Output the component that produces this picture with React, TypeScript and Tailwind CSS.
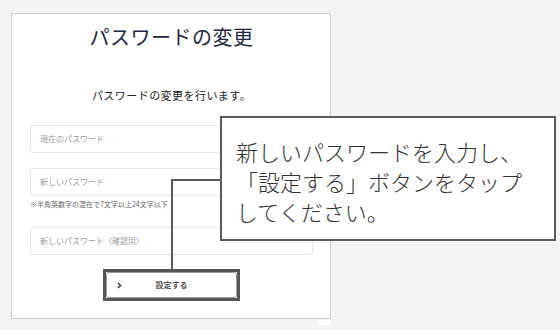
export default function App() {
  return (
    <div className="relative w-[560px] h-[330px] overflow-hidden bg-[#f3f3f3] pl-[11px] pt-[13px] font-['Noto_Sans_CJK_JP',sans-serif]">
      <div className="w-[320px] h-[306px] bg-white border border-[#cfcfcf] flex flex-col items-center pl-[18px] pr-[17px]">
        <h1 className="mt-[9px] h-[28px] leading-[28px] text-[20px] tracking-[0.5px] text-[#1f2643]">
          パスワードの変更
        </h1>
        <p className="mt-[36px] h-[16px] leading-[16px] text-[11px] tracking-[0.45px] text-[#222]">
          パスワードの変更を行います。
        </p>
        <div className="mt-[22px] w-full h-[28px] rounded-[3px] border border-[#e6e6e6] flex items-center pl-[9px] text-[8px] text-[#9a9a9a]">
          現在のパスワード
        </div>
        <div className="mt-[15px] w-full h-[28px] rounded-[3px] border border-[#e6e6e6] flex items-center pl-[9px] text-[8px] text-[#9a9a9a]">
          新しいパスワード
        </div>
        <p className="mt-[3px] w-full h-[10px] leading-[10px] text-[7px] text-[#666]">
          ※半角英数字の混在で7文字以上24文字以下
        </p>
        <div className="mt-[18px] w-full h-[28px] rounded-[3px] border border-[#e6e6e6] flex items-center pl-[9px] text-[8px] text-[#9a9a9a]">
          新しいパスワード（確認用）
        </div>
        <div className="mt-[14px] w-[137px] h-[32px] border-[3px] border-[#555]">
          <div className="w-full h-full rounded-[3px] border border-[#9a9a9a] bg-white flex items-center pl-[10px] pr-[10px]">
            <svg width="5" height="7" viewBox="0 0 5 7" className="shrink-0">
              <path d="M1 1 L3.5 3.5 L1 6" fill="none" stroke="#444" strokeWidth="1.6" />
            </svg>
            <span className="flex-1 text-center pr-[5px] text-[8px] font-bold text-[#555]">設定する</span>
          </div>
        </div>
      </div>
      <div className="ml-[308px] mt-[1px] w-[11px] h-[5px] bg-white" />

      {/* connector */}
      <div className="absolute left-[171px] top-[179px] w-[51px] h-[2px] bg-[#5a5a5a]" />
      <div className="absolute left-[171px] top-[179px] w-[2px] h-[90px] bg-[#5a5a5a]" />

      {/* callout */}
      <div className="absolute left-[220px] top-[116px] w-[336px] h-[125px] bg-white border-2 border-[#5a5a5a] pl-[14px] pt-[18px]">
        <p className="text-[22px] leading-[30px] font-light text-[#333] whitespace-nowrap">
          新しいパスワードを入力し、
          <br />
          「設定する」ボタンをタップ
          <br />
          してください。
        </p>
      </div>
    </div>
  );
}
